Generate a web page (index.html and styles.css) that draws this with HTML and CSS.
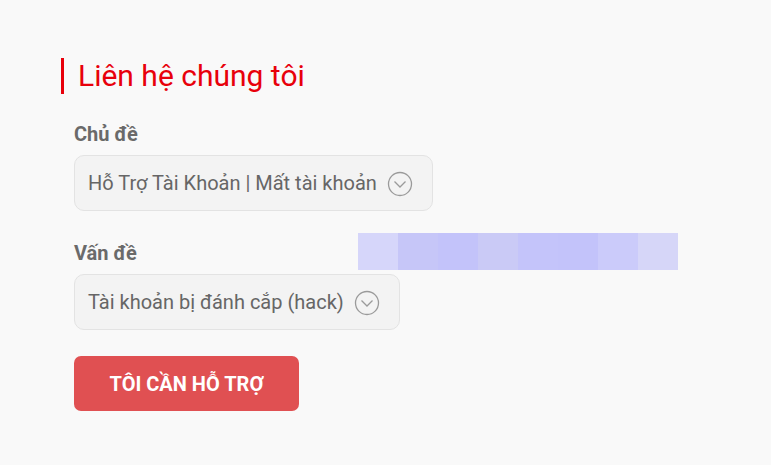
FILE: index.html
```html
<!DOCTYPE html>
<html lang="vi">
<head>
<meta charset="utf-8">
<link rel="stylesheet" href="styles.css">
</head>
<body>
<section class="contact">
  <h1 class="title">Liên hệ chúng tôi</h1>
  <form class="form">
    <div class="field">
      <label class="label">Chủ đề</label>
      <div class="select">
        <span>Hỗ Trợ Tài Khoản | Mất tài khoản</span>
        <svg class="chev" width="26" height="26" viewBox="0 0 26 26"><circle cx="13" cy="13" r="11.5" fill="none" stroke="#9a9a9a" stroke-width="1.3"/><path d="M7.5 10.5 L13 16 L18.5 10.5" fill="none" stroke="#9a9a9a" stroke-width="1.3"/></svg>
      </div>
    </div>
    <div class="field">
      <div class="label-row">
        <label class="label">Vấn đề</label>
        <div class="pixels">
          <i style="background:#d6d6fa"></i><i style="background:#c6c6f8"></i><i style="background:#c3c3fa"></i><i style="background:#cacaf6"></i><i style="background:#c4c4fa"></i><i style="background:#c3c3fa"></i><i style="background:#cbcbfa"></i><i style="background:#d6d6f8"></i>
        </div>
      </div>
      <div class="select">
        <span>Tài khoản bị đánh cắp (hack)</span>
        <svg class="chev" width="26" height="26" viewBox="0 0 26 26"><circle cx="13" cy="13" r="11.5" fill="none" stroke="#9a9a9a" stroke-width="1.3"/><path d="M7.5 10.5 L13 16 L18.5 10.5" fill="none" stroke="#9a9a9a" stroke-width="1.3"/></svg>
      </div>
    </div>
    <button type="button" class="btn">TÔI CẦN HỖ TRỢ</button>
  </form>
</section>
</body>
</html>
```
FILE: styles.css
```css
html, body {
  margin: 0;
  background: #f9f9f9;
  font-family: Roboto, "Noto Sans", sans-serif;
}
.contact {
  padding: 58px 0 0 61px;
}
.title {
  margin: 0;
  border-left: 3px solid #e8000b;
  padding-left: 14px;
  height: 36px;
  line-height: 36px;
  font-size: 30px;
  font-weight: 400;
  color: #e8000b;
}
.form {
  padding-left: 13px;
  padding-top: 28px;
  display: flex;
  flex-direction: column;
  align-items: flex-start;
}
.field {
  display: flex;
  flex-direction: column;
  align-items: flex-start;
  gap: 9px;
  margin-bottom: 30px;
}
.field + .field { margin-bottom: 26px; }
.label-row {
  display: flex;
  align-items: flex-start;
}
.label {
  font-size: 20px;
  font-weight: 700;
  line-height: 24px;
  color: #6a6a6a;
  width: 284px;
}
.pixels {
  display: flex;
  height: 37px;
  margin: -8px 0;
}
.pixels i {
  display: block;
  width: 40px;
  height: 37px;
}
.select {
  box-sizing: border-box;
  height: 56px;
  display: flex;
  align-items: center;
  gap: 10px;
  padding: 0 19px 0 13px;
  background: #f3f3f3;
  border: 1px solid #e3e3e3;
  border-radius: 10px;
  font-size: 20px;
  color: #666;
}
.chev { display: block; margin-top: 2px; }
.btn {
  width: 225px;
  height: 55px;
  border: 0;
  border-radius: 7px;
  background: #e05052;
  color: #fff;
  font-family: Roboto, "Noto Sans", sans-serif;
  font-size: 20px;
  font-weight: 700;
  padding: 0;
}
```
